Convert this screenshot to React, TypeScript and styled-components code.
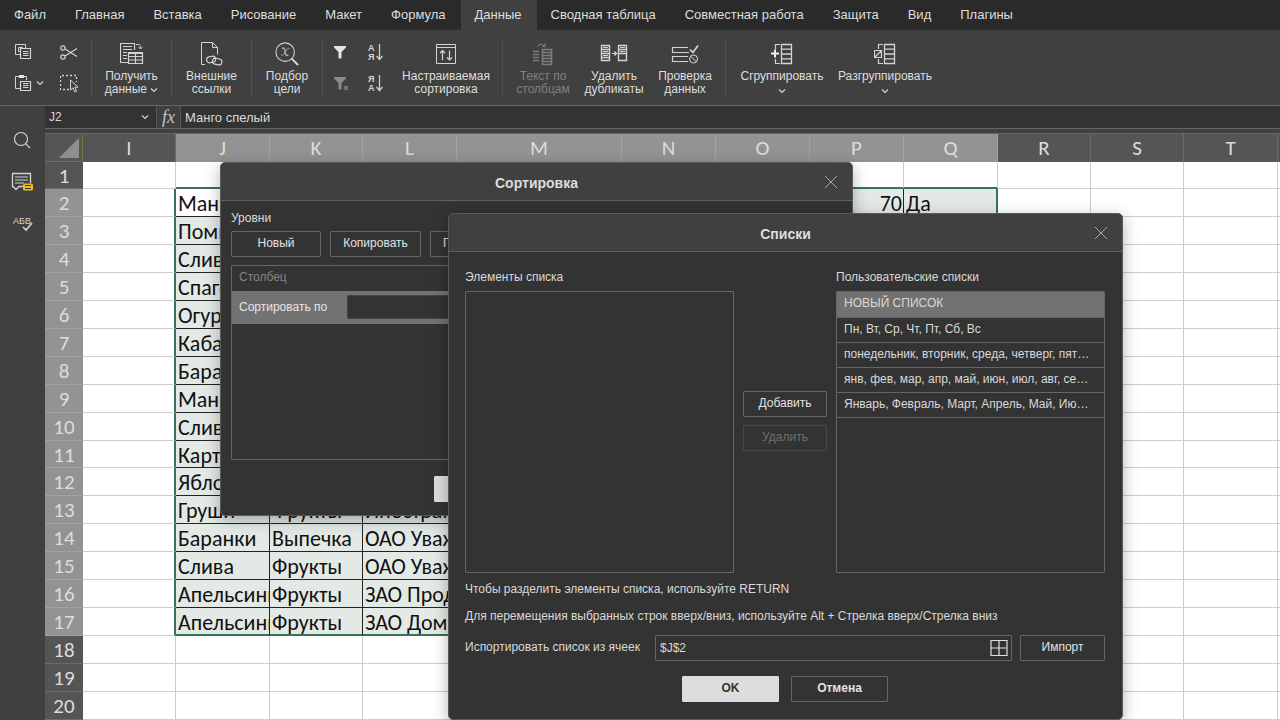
import React from "react";
import styled, { createGlobalStyle, css } from "styled-components";

const GlobalStyle = createGlobalStyle`
  *, *::before, *::after { box-sizing: border-box; }
  body {
    margin: 0;
    background: #404040;
    color: #d9d9d9;
    font-family: "Liberation Sans", Arial, sans-serif;
    font-size: 12px;
  }
  button, input, textarea { font: inherit; color: inherit; margin: 0; }
`;

/* ---------- shell ---------- */

const Screen = styled.div`
  position: relative;
  display: flex;
  flex-direction: column;
  height: 100vh;
  overflow: hidden;
  background: #404040;
`;

const MenuBar = styled.nav`
  display: flex;
  height: 30px;
  flex: none;
  background: #2a2a2a;
`;

const MenuTab = styled.button<{ $active?: boolean }>`
  border: 0;
  padding: 0 15px 0 14px;
  background: ${(p) => (p.$active ? "#404040" : "transparent")};
  color: #dedede;
  font-size: 13px;
  line-height: 30px;
  white-space: nowrap;
`;

const Ribbon = styled.div`
  display: flex;
  flex: none;
  height: 76px;
  padding: 8px 0 9px;
  border-bottom: 1px solid #666;
`;

const Group = styled.div`
  display: flex;
  border-right: 1px solid #505050;
  &:last-child { border-right: 0; }
`;

const SmallGrid = styled.div<{ $first: number; $second: number; $pad: number }>`
  display: grid;
  grid-template-columns: ${(p) => p.$first}px ${(p) => p.$second}px;
  grid-template-rows: 28px 34px;
  padding-left: ${(p) => p.$pad}px;
`;

const SmallButton = styled.button<{ $dim?: boolean }>`
  display: flex;
  align-items: center;
  gap: 4px;
  padding: 0;
  border: 0;
  background: none;
  opacity: ${(p) => (p.$dim ? 0.45 : 1)};
`;

const BigButton = styled.button<{ $w: number; $dim?: boolean }>`
  display: flex;
  flex-direction: column;
  align-items: center;
  width: ${(p) => p.$w}px;
  padding: 4px 0 0;
  border: 0;
  background: none;
  color: #dedede;
  line-height: 13px;
  white-space: nowrap;
  opacity: ${(p) => (p.$dim ? 0.4 : 1)};
  & > svg { margin-bottom: 4px; }
  & > span + svg { margin: 5px 0 2px; }
`;

const Body = styled.div`
  display: flex;
  flex: 1;
  min-height: 0;
`;

const Rail = styled.aside`
  display: flex;
  flex-direction: column;
  align-items: center;
  gap: 21px;
  width: 45px;
  flex: none;
  padding: 24px 0 0;
`;

const RailButton = styled.button`
  display: flex;
  padding: 0;
  border: 0;
  background: none;
`;

const Main = styled.main`
  display: flex;
  flex-direction: column;
  flex: 1;
  min-width: 0;
`;

const FormulaBar = styled.div`
  display: flex;
  flex: none;
  height: 23px;
  background: #333;
  border-bottom: 1px solid #666;
`;

const NameBox = styled.div`
  display: flex;
  align-items: center;
  width: 112px;
  border-right: 1px solid #555;
  padding-right: 7px;
`;

const BareInput = styled.input`
  flex: 1;
  min-width: 0;
  height: 22px;
  border: 0;
  outline: 0;
  padding: 0 4px;
  background: none;
`;

const FormulaInput = styled(BareInput)`
  font-size: 13px;
`;

const ChevronButton = styled.button`
  display: flex;
  padding: 0;
  border: 0;
  background: none;
`;

const FxButton = styled.button`
  width: 24px;
  border: 0;
  border-right: 1px solid #555;
  padding: 0;
  background: #404040;
  color: #c4c4c4;
  font: italic 18px/20px "Liberation Serif", serif;
`;

const SheetArea = styled.div`
  flex: 1;
  min-height: 0;
  margin-top: 4px;
  border-top: 1px solid #666;
  overflow: hidden;
  background: #fff;
`;

/* ---------- sheet ---------- */

const Sheet = styled.table`
  table-layout: fixed;
  width: 1327px;
  border-collapse: separate;
  border-spacing: 0;
  color: #111;
  font-family: Carlito, "Noto Sans", "Open Sans", sans-serif;
  font-size: 22px;
  line-height: 23px;
  tbody tr { height: 28px; }
  tbody tr:nth-child(10n + 1) { height: 27px; }
`;

const headCell = css<{ $on?: boolean }>`
  padding: 0;
  font-size: 21px;
  font-weight: 400;
  text-align: center;
  color: #dcdcdc;
  background: ${(p) => (p.$on ? "#939393" : "#555")};
  border: 0 solid ${(p) => (p.$on ? "#a2a2a2" : "#6c6c6c")};
`;

const ColHead = styled.th<{ $on?: boolean }>`
  ${headCell}
  height: 28px;
  padding-top: 1px;
  border-right-width: 1px;
`;

const RowHead = styled.th<{ $on?: boolean }>`
  ${headCell}
  padding-top: 2px;
  border-bottom-width: 1px;
`;

const Corner = styled.th`
  padding: 4px 3px 3px 14px;
  background: #555;
  border-right: 1px solid #74743c;
  border-bottom: 1px solid #74743c;
  line-height: 0;
`;

type CellProps = {
  $sel?: boolean;
  $active?: boolean;
  $right?: string;
  $bottom?: string;
  $num?: boolean;
};

const Cell = styled.td<CellProps>`
  padding: 2px 1px 0 2px;
  overflow: hidden;
  white-space: nowrap;
  text-align: ${(p) => (p.$num ? "right" : "left")};
  background: ${(p) => (p.$sel && !p.$active ? "#e3eae6" : "#fff")};
  border-right: ${(p) => p.$right ?? "1px solid #ccc"};
  border-bottom: ${(p) => p.$bottom ?? "1px solid #ccc"};
`;

const COLS: [string, number][] = [
  ["I", 93], ["J", 94], ["K", 93], ["L", 94], ["M", 165], ["N", 94], ["O", 94],
  ["P", 94], ["Q", 94], ["R", 93], ["S", 93], ["T", 94], ["U", 94],
];

const DATA: Record<number, Record<string, string>> = {
  2: { J: "Манго", P: "70", Q: "Да" },
  3: { J: "Помидоры" },
  4: { J: "Слива" },
  5: { J: "Спагетти" },
  6: { J: "Огурцы" },
  7: { J: "Кабачки" },
  8: { J: "Баранки" },
  9: { J: "Манго" },
  10: { J: "Слива" },
  11: { J: "Картофель" },
  12: { J: "Яблоки" },
  13: { J: "Груши", K: "Фрукты", L: "Иностранец" },
  14: { J: "Баранки", K: "Выпечка", L: "ОАО Уважение" },
  15: { J: "Слива", K: "Фрукты", L: "ОАО Уважение" },
  16: { J: "Апельсины", K: "Фрукты", L: "ЗАО Продукты" },
  17: { J: "Апельсины", K: "Фрукты", L: "ЗАО Домино" },
};

const GREEN = "2px solid #3a7352";
const DARK = "1px solid #222";
const ROWS = Array.from({ length: 21 }, (_, i) => i + 1);
const inCols = (c: string) => c >= "J" && c <= "Q";
const inRows = (r: number) => r >= 2 && r <= 17;

function cellProps(c: string, r: number): CellProps {
  const sel = inCols(c) && inRows(r);
  let right: string | undefined;
  let bottom: string | undefined;
  if (inRows(r) && (c === "I" || c === "Q")) right = GREEN;
  else if (sel) right = DARK;
  if (inCols(c) && (r === 1 || r === 17)) bottom = GREEN;
  else if (sel) bottom = DARK;
  return {
    $sel: sel,
    $active: c === "J" && r === 2,
    $right: right,
    $bottom: bottom,
    $num: c === "P",
  };
}

/* ---------- dialogs ---------- */

const Dialog = styled.section<{ $x: number; $y: number; $w: number }>`
  position: absolute;
  left: ${(p) => p.$x}px;
  top: ${(p) => p.$y}px;
  width: ${(p) => p.$w}px;
  border: 1px solid #5a5a5a;
  border-radius: 5px;
  background: #333;
  box-shadow: 0 4px 16px rgba(0, 0, 0, 0.3);
  overflow: hidden;
`;

const DialogHead = styled.header`
  display: flex;
  align-items: center;
  height: 38px;
  padding: 0 14px 0 28px;
  background: #404040;
  border-bottom: 1px solid #606060;
`;

const DialogTitle = styled.h2`
  flex: 1;
  margin: 0;
  padding-top: 2px;
  text-align: center;
  font-size: 14px;
  line-height: 16px;
  font-weight: 700;
  color: #dedede;
`;

const CloseButton = styled.button`
  display: flex;
  padding: 0;
  border: 0;
  background: none;
`;

const Button = styled.button<{ $w: number; $primary?: boolean; $bold?: boolean }>`
  width: ${(p) => p.$w}px;
  height: 26px;
  flex: none;
  padding: 0 0 2px;
  border: 1px solid ${(p) => (p.$primary ? "#ddd" : "#666")};
  border-radius: 1px;
  background: ${(p) => (p.$primary ? "#ddd" : "transparent")};
  color: ${(p) => (p.$primary ? "#333" : "#e2e2e2")};
  font-weight: ${(p) => (p.$bold ? 700 : 400)};
  &:disabled { color: #707070; border-color: #484848; }
`;

const Footer = styled.footer`
  display: flex;
  justify-content: center;
  gap: 12px;
`;

const SortBody = styled.div`
  display: flex;
  flex-direction: column;
  padding: 9px 11px 13px 10px;
`;

const Caption = styled.div`
  line-height: 16px;
`;

const ButtonRow = styled.div`
  display: flex;
  gap: 9px;
  margin: 5px 0 8px;
`;

const LevelList = styled.div`
  height: 195px;
  margin-bottom: 16px;
  border: 1px solid #666;
  border-radius: 1px;
`;

const LevelHead = styled.div`
  height: 25px;
  padding-left: 7px;
  line-height: 23px;
  color: #858585;
`;

const LevelRow = styled.label`
  display: flex;
  align-items: center;
  gap: 20px;
  height: 33px;
  padding: 0 7px 2px;
  background: #727272;
  color: #e6e6e6;
`;

const LevelField = styled.input`
  flex: 1;
  min-width: 0;
  height: 24px;
  border: 1px solid #444;
  border-radius: 1px;
  background: #333;
`;

const ListsBody = styled.div`
  display: flex;
  flex-direction: column;
  padding: 17px 17px 17px 16px;
`;

const ListsColumns = styled.div`
  display: grid;
  grid-template-columns: 1fr 84px 1fr;
  column-gap: 9px;
  margin-bottom: 8px;
`;

const Column = styled.div`
  display: flex;
  flex-direction: column;
  gap: 6px;
  min-width: 0;
  line-height: 16px;
`;

const ItemsArea = styled.textarea`
  height: 282px;
  border: 1px solid #666;
  border-radius: 1px;
  outline: 0;
  background: #333;
  resize: none;
`;

const MidButtons = styled.div`
  display: flex;
  flex-direction: column;
  gap: 8px;
  padding-top: 122px;
`;

const CustomLists = styled.ul`
  height: 282px;
  margin: 0;
  padding: 0;
  border: 1px solid #666;
  border-radius: 1px;
  list-style: none;
`;

const CustomItem = styled.li<{ $on?: boolean }>`
  height: ${(p) => (p.$on ? 26 : 25)}px;
  padding: 0 14px 0 7px;
  border-bottom: 1px solid #666;
  background: ${(p) => (p.$on ? "#727272" : "transparent")};
  line-height: 23px;
  overflow: hidden;
  white-space: nowrap;
  text-overflow: ellipsis;
`;

const Hint = styled.p`
  margin: 0 0 11px;
  line-height: 16px;
`;

const ImportRow = styled.div`
  display: flex;
  align-items: center;
  gap: 8px;
  margin-bottom: 15px;
`;

const ImportLabel = styled.label`
  width: 182px;
  flex: none;
  padding-bottom: 2px;
`;

const RangeField = styled.div`
  display: flex;
  align-items: center;
  flex: 1;
  height: 26px;
  border: 1px solid #666;
  border-radius: 1px;
  padding-right: 3px;
`;

/* ---------- icons ---------- */

type SvgProps = { w: number; h: number; children: React.ReactNode };
const Svg = ({ w, h, children }: SvgProps) => (
  <svg width={w} height={h} viewBox={`0 0 ${w} ${h}`} fill="none" stroke="#d4d4d4" strokeWidth="1" aria-hidden="true">
    {children}
  </svg>
);

const Chevron = () => (
  <Svg w={8} h={6}><path d="M1 1.5l3 3 3-3" strokeWidth="1.2" /></Svg>
);

const Close = () => (
  <Svg w={14} h={14}><path d="M1 1l12 12M13 1L1 13" stroke="#a8a8a8" /></Svg>
);

const CopyIcon = () => (
  <Svg w={17} h={16}>
    <path d="M5 10.500H.500V.500h10V4M5 7.500H3.500v-4H8" />
    <path d="M5.500 4.500h10v10h-10zM8 7.500h5.500M8 9.500h5.500M8 11.500h5.500" strokeWidth="1.200" />
  </Svg>
);

const PasteIcon = () => (
  <Svg w={17} h={17}>
    <path d="M5 13.500H.500v-12h11V5" />
    <path d="M4 0h5v3H4z" fill="#e4e4e4" stroke="none" />
    <path d="M5.500 6.500h10v9h-10zM8 8.500h5.500M8 10.500h5.500M8 12.500h5.500" strokeWidth="1.200" />
  </Svg>
);

const CutIcon = () => (
  <Svg w={18} h={15}>
    <circle cx="3" cy="3" r="2.200" strokeWidth="1.200" />
    <circle cx="3" cy="12" r="2.200" strokeWidth="1.200" />
    <path d="M5 4l12 7.500M5 11l12-7.500" strokeWidth="1.200" />
  </Svg>
);

const SelectIcon = () => (
  <Svg w={19} h={19}>
    <path d="M9 15.500H.500v-14h16V8" strokeDasharray="2 2" strokeWidth="1.300" />
    <path d="M10.500 6v10l2.500-2.200 1.800 4.200 1.800-.800-1.800-4h3.200z" fill="#404040" />
  </Svg>
);

const GetDataIcon = () => (
  <Svg w={24} h={24}>
    <path d="M8 20.500H.500v-19h14V8M3 4.500h9M3 7.500h9M3 10.500h4M3 13.500h4M3 16.500h4" strokeWidth="1.200" />
    <path d="M16 2.500h2c2 0 2.500.500 2.500 4M18.500 5l2 2 2-2" />
    <path d="M8.500 10.500h14v11h-14zM8.500 14.500h14M8.500 18h14M15.500 10.500v11" strokeWidth="1.200" />
    <path d="M9 10h13v2H9z" fill="#d4d4d4" stroke="none" />
  </Svg>
);

const LinkDocIcon = () => (
  <Svg w={24} h={24}>
    <path d="M5 22.500H1.500v-22h11l5 5v7M12.500.500v5h5" />
    <rect x="6.500" y="14.500" width="9" height="6" rx="3" transform="rotate(-12 11 17)" strokeWidth="1.200" />
    <rect x="12.500" y="16.500" width="9.500" height="6" rx="3" transform="rotate(12 17 19)" strokeWidth="1.200" />
  </Svg>
);

const GoalIcon = () => (
  <Svg w={26} h={26}>
    <circle cx="11" cy="11" r="10" strokeWidth="1.200" />
    <path d="M18 18l7 7" strokeWidth="2.200" />
    <path d="M7.500 7c1.600-1 2.600-.400 3.100 1.500l1 4.500c.5 1.900 1.400 2 2.900.8" strokeWidth="1.500" stroke="#b4b4b4" />
    <path d="M15.500 7c-1.600-.6-2.500.3-4 3.200s-2.600 4.600-4.800 4.100" stroke="#b4b4b4" />
  </Svg>
);

const FunnelIcon = ({ clear }: { clear?: boolean }) => (
  <Svg w={16} h={15}>
    <path d="M0 1h12v1.500L7.500 7v6.500h-3V7L0 2.500z" fill="#e4e4e4" stroke="none" />
    {clear && <path d="M10 10l4 4M14 10l-4 4" strokeWidth="1.200" />}
  </Svg>
);

const SortIcon = ({ a, b }: { a: string; b: string }) => (
  <Svg w={17} h={19}>
    <g fill="#d4d4d4" stroke="none" fontSize="9" fontWeight="700">
      <text x="0" y="8">{a}</text>
      <text x="0" y="17">{b}</text>
    </g>
    <path d="M11.500 1v15M8.500 13l3 3.500 3-3.500" strokeWidth="1.200" />
  </Svg>
);

const CustomSortIcon = () => (
  <Svg w={22} h={24}>
    <path d="M1.500 2.500h19v19h-19zM1.500 5.500h19" />
    <path d="M7.500 18V8.500M5 11l2.500-2.500L10 11M14.500 8.500V18M12 15.500l2.500 2.500 2.500-2.500" strokeWidth="1.200" />
  </Svg>
);

const TextColsIcon = () => (
  <Svg w={22} h={24}>
    <path d="M1 9.500h6M1 12.500h6M1 15.500h6M1 18.500h6" strokeWidth="1.600" />
    <path d="M10.500 7.500h9v15h-9zM10.500 10.500h9M10.500 13.500h9M10.500 16.500h9M10.500 19.500h9" strokeWidth="1.600" />
    <path d="M5.500 4.500c1.500-3 5-3 7 0M13 1.500v3h-3" strokeWidth="1.200" />
  </Svg>
);

const DupIcon = () => (
  <Svg w={28} h={24}>
    <path d="M1 3.500h9M1 7.500h9M1 11.500h9M1 15.500h9M1 18.500h9M1.500 3v16M9.500 3v16M18 3.500h9M18 7.500h9M18 11.500h9M18 18.500h9M18.500 3v16M26.500 3v16" strokeWidth="1.400" />
    <path d="M3 5.500h5M3 13.500h5M20 5.500h5M20 9.500h5M3 9.500h5" />
    <path d="M12 11.500h4M14.500 9.500l2 2-2 2" strokeWidth="1.200" />
  </Svg>
);

const CheckDataIcon = () => (
  <Svg w={28} h={24}>
    <path d="M17 5.500H1.500v5H18M17 14.500H1.500v5H17" strokeWidth="1.200" />
    <path d="M19 7.500l3 3 5-7" strokeWidth="1.700" />
    <circle cx="22.500" cy="17" r="4" />
    <path d="M19.700 14.200l5.600 5.600" />
  </Svg>
);

const GroupIcon = ({ off }: { off?: boolean }) => (
  <Svg w={22} h={24}>
    <path d="M10.500 2.500h10v19h-10zM10.500 7.200h10M10.500 12h10M10.500 16.800h10" strokeWidth="1.300" />
    <path d="M9 2.500H4.500V7M4.500 17v4.500H9" strokeWidth="1.200" />
    {off ? (
      <path d="M.500 8.500h7v7h-7zM.500 15.500l7-7" strokeWidth="1.200" />
    ) : (
      <path d="M0 11.500h8M4 7.500v8" strokeWidth="2" stroke="#eee" />
    )}
  </Svg>
);

const SearchIcon = () => (
  <Svg w={20} h={20}>
    <circle cx="8" cy="9" r="6.500" strokeWidth="1.200" />
    <path d="M12.800 13.800l4.200 4.200" strokeWidth="1.200" />
  </Svg>
);

const CommentIcon = () => (
  <Svg w={24} h={22}>
    <path d="M14 15.500H8l-3 3-3-3H1.500v-13h18V12" strokeWidth="1.300" />
    <path d="M4 6h13M4 9h13M4 12h9" />
    <rect x="12" y="12.500" width="10" height="7" rx="1.500" fill="#e9bd1a" stroke="none" />
    <path d="M14 14.500h6M14 17.500h6" stroke="#333" />
  </Svg>
);

const SpellIcon = () => (
  <Svg w={20} h={20}>
    <text x="0" y="10" fill="#d4d4d4" stroke="none" fontSize="9">АБВ</text>
    <path d="M10 13l3 3 6-7" strokeWidth="1.600" />
  </Svg>
);

const GridIcon = () => (
  <Svg w={18} h={16}>
    <path d="M1 .500h16v15H1zM9 .500v15M1 8h16" stroke="#e0e0e0" strokeWidth="1.200" />
  </Svg>
);

/* ---------- page ---------- */

const TABS = [
  "Файл", "Главная", "Вставка", "Рисование", "Макет", "Формула", "Данные",
  "Сводная таблица", "Совместная работа", "Защита", "Вид", "Плагины",
];

const LISTS = [
  "НОВЫЙ СПИСОК",
  "Пн, Вт, Ср, Чт, Пт, Сб, Вс",
  "понедельник, вторник, среда, четверг, пятница, суббота, воскресенье",
  "янв, фев, мар, апр, май, июн, июл, авг, сен, окт, ноя, дек",
  "Январь, Февраль, Март, Апрель, Май, Июнь, Июль, Август",
];

function SheetGrid() {
  return (
    <Sheet>
      <colgroup>
        <col style={{ width: 38 }} />
        {COLS.map(([c, w]) => <col key={c} style={{ width: w }} />)}
      </colgroup>
      <thead>
        <tr>
          <Corner>
            <Svg w={20} h={20}><path d="M20 0v20H0z" fill="#8e8e8e" stroke="none" /></Svg>
          </Corner>
          {COLS.map(([c]) => <ColHead key={c} scope="col" $on={inCols(c)}>{c}</ColHead>)}
        </tr>
      </thead>
      <tbody>
        {ROWS.map((r) => (
          <tr key={r}>
            <RowHead scope="row" $on={inRows(r)}>{r}</RowHead>
            {COLS.map(([c]) => <Cell key={c} {...cellProps(c, r)}>{DATA[r]?.[c]}</Cell>)}
          </tr>
        ))}
      </tbody>
    </Sheet>
  );
}

function SortDialog() {
  return (
    <Dialog role="dialog" aria-label="Сортировка" $x={220} $y={162} $w={633}>
      <DialogHead>
        <DialogTitle>Сортировка</DialogTitle>
        <CloseButton aria-label="Закрыть"><Close /></CloseButton>
      </DialogHead>
      <SortBody>
        <Caption>Уровни</Caption>
        <ButtonRow>
          <Button $w={90}>Новый</Button>
          <Button $w={91}>Копировать</Button>
          <Button $w={90}>Параметры</Button>
        </ButtonRow>
        <LevelList>
          <LevelHead>Столбец</LevelHead>
          <LevelRow>
            Сортировать по
            <LevelField />
          </LevelRow>
        </LevelList>
        <Footer>
          <Button $w={96} $primary $bold>OK</Button>
          <Button $w={96} $bold>Отмена</Button>
        </Footer>
      </SortBody>
    </Dialog>
  );
}

function ListsDialog() {
  return (
    <Dialog role="dialog" aria-label="Списки" $x={448} $y={213} $w={675}>
      <DialogHead>
        <DialogTitle>Списки</DialogTitle>
        <CloseButton aria-label="Закрыть"><Close /></CloseButton>
      </DialogHead>
      <ListsBody>
        <ListsColumns>
          <Column>
            <label htmlFor="items">Элементы списка</label>
            <ItemsArea id="items" />
          </Column>
          <MidButtons>
            <Button $w={84}>Добавить</Button>
            <Button $w={84} disabled>Удалить</Button>
          </MidButtons>
          <Column>
            <span id="custom-lists">Пользовательские списки</span>
            <CustomLists role="listbox" aria-labelledby="custom-lists">
              {LISTS.map((t, i) => (
                <CustomItem key={t} role="option" aria-selected={i === 0} $on={i === 0}>{t}</CustomItem>
              ))}
            </CustomLists>
          </Column>
        </ListsColumns>
        <Hint>Чтобы разделить элементы списка, используйте RETURN</Hint>
        <Hint>Для перемещения выбранных строк вверх/вниз, используйте Alt + Стрелка вверх/Стрелка вниз</Hint>
        <ImportRow>
          <ImportLabel htmlFor="range">Испортировать список из ячеек</ImportLabel>
          <RangeField>
            <BareInput id="range" defaultValue="$J$2" />
            <ChevronButton aria-label="Выбор данных"><GridIcon /></ChevronButton>
          </RangeField>
          <Button $w={85}>Импорт</Button>
        </ImportRow>
        <Footer>
          <Button $w={97} $primary $bold>OK</Button>
          <Button $w={97} $bold>Отмена</Button>
        </Footer>
      </ListsBody>
    </Dialog>
  );
}

export default function App() {
  return (
    <Screen>
      <GlobalStyle />
      <MenuBar>
        {TABS.map((t) => <MenuTab key={t} $active={t === "Данные"}>{t}</MenuTab>)}
      </MenuBar>
      <Ribbon>
        <Group>
          <SmallGrid $pad={15} $first={45} $second={31}>
            <SmallButton aria-label="Копировать"><CopyIcon /></SmallButton>
            <SmallButton aria-label="Вырезать"><CutIcon /></SmallButton>
            <SmallButton aria-label="Вставить"><PasteIcon /><Chevron /></SmallButton>
            <SmallButton aria-label="Выделить все"><SelectIcon /></SmallButton>
          </SmallGrid>
        </Group>
        <Group>
          <BigButton $w={79}><GetDataIcon /><span>Получить</span><span>данные <Chevron /></span></BigButton>
        </Group>
        <Group>
          <BigButton $w={79}><LinkDocIcon /><span>Внешние</span><span>ссылки</span></BigButton>
        </Group>
        <Group>
          <BigButton $w={70}><GoalIcon /><span>Подбор</span><span>цели</span></BigButton>
        </Group>
        <Group>
          <SmallGrid $pad={11} $first={34} $second={22}>
            <SmallButton aria-label="Фильтр"><FunnelIcon /></SmallButton>
            <SmallButton aria-label="Сортировка по возрастанию"><SortIcon a="А" b="Я" /></SmallButton>
            <SmallButton aria-label="Очистить фильтр" $dim><FunnelIcon clear /></SmallButton>
            <SmallButton aria-label="Сортировка по убыванию"><SortIcon a="Я" b="А" /></SmallButton>
          </SmallGrid>
          <BigButton $w={112}><CustomSortIcon /><span>Настраиваемая</span><span>сортировка</span></BigButton>
        </Group>
        <Group>
          <BigButton $w={80} $dim><TextColsIcon /><span>Текст по</span><span>столбцам</span></BigButton>
          <BigButton $w={62}><DupIcon /><span>Удалить</span><span>дубликаты</span></BigButton>
          <BigButton $w={80}><CheckDataIcon /><span>Проверка</span><span>данных</span></BigButton>
        </Group>
        <Group>
          <BigButton $w={112}><GroupIcon /><span>Сгруппировать</span><Chevron /></BigButton>
          <BigButton $w={94}><GroupIcon off /><span>Разгруппировать</span><Chevron /></BigButton>
        </Group>
      </Ribbon>
      <Body>
        <Rail>
          <RailButton aria-label="Поиск"><SearchIcon /></RailButton>
          <RailButton aria-label="Комментарии"><CommentIcon /></RailButton>
          <RailButton aria-label="Проверка орфографии"><SpellIcon /></RailButton>
        </Rail>
        <Main>
          <FormulaBar>
            <NameBox>
              <BareInput aria-label="Имя ячейки" defaultValue="J2" />
              <ChevronButton aria-label="Список имён"><Chevron /></ChevronButton>
            </NameBox>
            <FxButton aria-label="Вставить функцию">fx</FxButton>
            <FormulaInput aria-label="Формула" defaultValue="Манго спелый" />
          </FormulaBar>
          <SheetArea><SheetGrid /></SheetArea>
        </Main>
      </Body>
      <SortDialog />
      <ListsDialog />
    </Screen>
  );
}
